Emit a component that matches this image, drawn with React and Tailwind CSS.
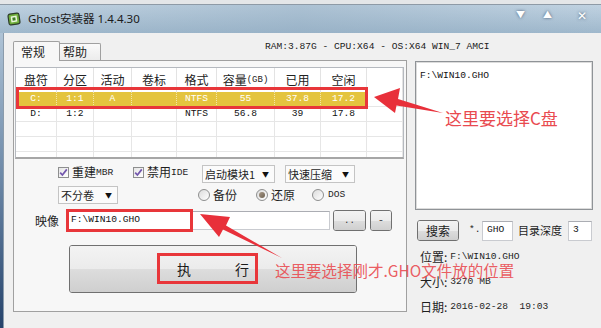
import React from "react";

const MONO = "font-['Liberation_Mono',monospace]";

const COLS = [41, 37, 38, 45, 40, 58, 46, 46, 36];

const HEAD = [
  "盘符",
  "分区",
  "活动",
  "卷标",
  "格式",
  <span key="c" className="flex items-center leading-none">
    容量<span className={`${MONO} text-[9px] leading-none mt-[1px]`}>(GB)</span>
  </span>,
  "已用",
  "空闲",
  "",
];

const ROWS = [
  ["C:", "1:1", "A", "", "NTFS", "55", "37.8", "17.2", ""],
  ["D:", "1:2", "", "", "NTFS", "56.8", "39", "17.8", ""],
  ["", "", "", "", "", "", "", "", ""],
  ["", "", "", "", "", "", "", "", ""],
  ["", "", "", "", "", "", "", "", ""],
];

function Table() {
  return (
    <div className="ml-[1px] w-[389px] h-[92px] overflow-hidden bg-white border border-[#b5b9bf] border-b-2 border-b-[#a6a6a6]">
      <div className="flex h-[24px]">
        {HEAD.map((h, i) => (
          <div
            key={i}
            style={{ width: COLS[i] }}
            className="shrink-0 flex items-center justify-center border-r border-[#e3e3e3] text-[12px] text-[#222]"
          >
            {h}
          </div>
        ))}
      </div>
      {ROWS.map((r, ri) => (
        <div key={ri} className="flex h-[15px]">
          {r.map((c, ci) => {
            const sel = ri === 0 && ci < 8;
            return (
              <div
                key={ci}
                style={{ width: COLS[ci] }}
                className={
                  sel
                    ? `shrink-0 flex items-center justify-center bg-[#e4c43e] text-white border-r border-dotted border-[#f3e6a6] ${MONO} text-[9.6px]`
                    : `shrink-0 flex items-center justify-center border-r border-b border-[#e6e6e6] text-[#111] ${MONO} text-[9.6px]`
                }
              >
                {c}
              </div>
            );
          })}
        </div>
      ))}
    </div>
  );
}

function Check({ label, mono }) {
  return (
    <div className="flex items-center h-[12px]">
      <div className="w-[11px] h-[11px] border border-[#8e8f8f] bg-gradient-to-br from-[#e6e6e6] to-[#ffffff] flex items-center justify-center">
        <svg width="9" height="9" viewBox="0 0 9 9">
          <path d="M1.2 4.6 L3.4 7 L7.8 1.4" fill="none" stroke="#7357ad" strokeWidth="1.7" />
        </svg>
      </div>
      <span className="ml-[3px] text-[12px] leading-none text-[#1e1e1e]">{label}</span>
      <span className={`${MONO} text-[9.6px] leading-none mt-[2px] text-[#1e1e1e]`}>{mono}</span>
    </div>
  );
}

function Select({ text, w }) {
  return (
    <div
      style={{ width: w }}
      className="h-[18px] border border-[#c4c4c4] bg-[#fbfbfb] flex items-center pl-[2px] pr-[5px]"
    >
      <span className="text-[11px] text-[#1e1e1e] leading-none whitespace-nowrap">{text}</span>
      <span className="ml-auto text-[7px] text-[#111]">▼</span>
    </div>
  );
}

function Radio({ label, on, mono }) {
  return (
    <div className="flex items-center">
      <div className="w-[12px] h-[12px] rounded-full border border-[#8e8f8f] bg-gradient-to-br from-[#dcdcdc] to-[#ffffff] flex items-center justify-center">
        {on && <div className="w-[6px] h-[6px] rounded-full bg-gradient-to-br from-[#a79886] to-[#6e6252]" />}
      </div>
      <span className={mono ? `ml-[4px] ${MONO} text-[9.6px] text-[#1e1e1e]` : "ml-[3px] text-[12px] text-[#1e1e1e]"}>
        {label}
      </span>
    </div>
  );
}

function Btn({ w, h, children, className = "" }) {
  return (
    <div
      style={{ width: w, height: h }}
      className={`relative shrink-0 rounded-[3px] border border-[#707070] overflow-hidden flex items-center justify-center ${className}`}
    >
      <div className="absolute inset-0 flex flex-col">
        <div className="flex-1 bg-gradient-to-b from-[#f3f3f3] to-[#ebebeb]" />
        <div className="flex-1 bg-gradient-to-b from-[#dddddd] to-[#cfcfcf]" />
      </div>
      <div className="relative flex items-center justify-center">{children}</div>
    </div>
  );
}

function Input({ w, h, children, className = "" }) {
  return (
    <div
      style={{ width: w, height: h }}
      className={`shrink-0 bg-white border border-[#c9cbd0] border-t-[#abadb3] flex items-center pl-[4px] ${className}`}
    >
      {children}
    </div>
  );
}

export default function App() {
  return (
    <div className="relative w-[601px] h-[328px] overflow-hidden bg-[#f0f0f0] font-['Noto_Sans_CJK_SC',sans-serif] text-[12px] text-[#1e1e1e]">
      {/* top strip */}
      <div className="h-[5px] bg-[#e4e6e8] border-b border-[#8e9aa6]" />
      {/* title bar */}
      <div className="relative h-[28px] bg-gradient-to-b from-[#c0d2e1] to-[#9fb8cc] flex items-center">
        <div className="absolute inset-0 bg-gradient-to-r from-transparent via-[#8fa9bf]/40 to-transparent" />
        <div className="relative ml-[7px] w-[14px] h-[14px]">
          <svg width="14" height="14" viewBox="0 0 14 14">
            <rect x="1.5" y="1.5" width="11" height="11" rx="2" fill="#6fae3a" stroke="#2d3b2a" strokeWidth="1.2" transform="rotate(-8 7 7)" />
            <rect x="4" y="4" width="6" height="6" fill="#e9f5da" transform="rotate(-8 7 7)" />
            <rect x="5.5" y="5.5" width="3" height="3" fill="#3e7c22" transform="rotate(-8 7 7)" />
          </svg>
        </div>
        <span className="relative ml-[7px] font-['Noto_Sans','Noto_Sans_CJK_SC',sans-serif] text-[11.5px] text-[#1b1b1b]">
          Ghost安装器 1.4.4.30
        </span>
        <div className="relative ml-auto flex items-center text-white mr-[14px] -mt-[8px] [text-shadow:0_0_3px_rgba(40,60,90,0.8)]">
          <span className="text-[9px]">▼</span>
          <span className="ml-[18px] text-[9px]">▲</span>
          <span className="ml-[25px] text-[12px]">✕</span>
        </div>
      </div>
      {/* body */}
      <div className="flex h-[295px]">
        <div className="w-[4px] bg-gradient-to-b from-[#aec3d6] via-[#6b87a6] to-[#26436b] border-r border-[#8a9bab]" />
        <div className="flex-1 flex flex-col pl-[9px]">
          {/* tabs row */}
          <div className="flex items-end h-[27px]">
            <div className="relative z-10 -mb-px w-[47px] h-[20px] bg-[#f7f7f7] border border-b-0 border-[#a0a0a0] rounded-t-[2px] flex items-center pl-[7px] text-[12px]">
              常规
            </div>
            <div className="w-[41px] h-[17px] bg-gradient-to-b from-[#fafafa] to-[#ececec] border border-l-0 border-b-0 border-[#a0a0a0] rounded-tr-[2px] flex items-center pl-[3px] text-[12px]">
              帮助
            </div>
            <span className={`self-center ml-[164px] mt-[1px] ${MONO} text-[9.6px] text-[#1a1a1a]`}>
              RAM:3.87G - CPU:X64 - OS:X64 WIN_7 AMCI
            </span>
          </div>
          <div className="flex">
            {/* left panel */}
            <div className="shrink-0 w-[394px] h-[252px] border border-[#a0a0a0] bg-[#f7f7f7] pt-[6px] flex flex-col">
              <Table />
              {/* row 1 */}
              <div className="flex items-start h-[19px] mt-[6px]">
                <div className="ml-[44px] w-[74px] mt-[1px]">
                  <Check label="重建" mono="MBR" />
                </div>
                <div className="ml-[1px] w-[69px] mt-[1px]">
                  <Check label="禁用" mono="IDE" />
                </div>
                <Select text="启动模块1" w={73} />
                <div className="ml-[10px]">
                  <Select text="快速压缩" w={70} />
                </div>
              </div>
              {/* row 2 */}
              <div className="flex items-center h-[18px] mt-[2px]">
                <div className="ml-[44px]">
                  <Select text="不分卷" w={60} />
                </div>
                <div className="ml-[80px] w-[58px]">
                  <Radio label="备份" />
                </div>
                <div className="w-[56px]">
                  <Radio label="还原" on />
                </div>
                <Radio label="DOS" mono />
              </div>
              {/* row 3 */}
              <div className="flex items-center h-[21px] mt-[6px]">
                <span className="ml-[21px] w-[31px] text-[12px]">映像</span>
                <Input w={264} h={19}>
                  <span className={`${MONO} text-[9.6px] text-[#111]`}>{"F:\\WIN10.GHO"}</span>
                </Input>
                <div className="ml-[3px]">
                  <Btn w={33} h={21}>
                    <span className={`${MONO} text-[9px] text-[#333] mt-[3px]`}>..</span>
                  </Btn>
                </div>
                <div className="ml-[4px]">
                  <Btn w={22} h={21}>
                    <span className="text-[11px] text-[#333] leading-none -mt-[2px]">-</span>
                  </Btn>
                </div>
              </div>
              {/* execute */}
              <div className="ml-[55px] mt-[14px]">
                <Btn w={288} h={48}>
                  <div className="flex gap-[44px] text-[14px] text-[#1a1a1a]">
                    <span>执</span>
                    <span>行</span>
                  </div>
                </Btn>
              </div>
            </div>
            {/* right column */}
            <div className="ml-[8px] w-[178px] flex flex-col">
              <div className="mt-[1px] h-[149px] bg-white border border-[#8f9397] shadow-[inset_0_0_0_1px_#dcdcdc] pt-[2px] pl-[4px]">
                <span className={`${MONO} text-[9.6px] text-[#111]`}>{"F:\\WIN10.GHO"}</span>
              </div>
              <div className="flex items-center h-[21px] mt-[10px]">
                <Btn w={42} h={21} className="ml-[2px]">
                  <span className="text-[12px] text-[#1a1a1a]">搜索</span>
                </Btn>
                <span className={`shrink-0 ml-[10px] w-[13px] ${MONO} text-[9.6px]`}>*.</span>
                <Input w={31} h={20} className="pl-[3px]">
                  <span className={`${MONO} text-[9.6px] text-[#111]`}>GHO</span>
                </Input>
                <span className="shrink-0 ml-[5px] w-[45px] whitespace-nowrap text-[11px]">目录深度</span>
                <div className="ml-[5px] shrink-0">
                  <Input w={24} h={20}>
                    <span className={`${MONO} text-[9.6px] text-[#111]`}>3</span>
                  </Input>
                </div>
              </div>
              <div className="ml-[5px] mt-[6px] h-[20px] flex items-center">
                <span className="text-[12px]">位置:</span>
                <span className={`ml-[3px] ${MONO} text-[9.6px]`}>{"F:\\WIN10.GHO"}</span>
              </div>
              <div className="ml-[5px] mt-[5px] h-[20px] flex items-center">
                <span className="text-[12px]">大小:</span>
                <span className={`ml-[3px] ${MONO} text-[9.6px]`}>3270 MB</span>
              </div>
              <div className="ml-[5px] mt-[5px] h-[20px] flex items-center">
                <span className="text-[12px]">日期:</span>
                <span className={`ml-[3px] ${MONO} text-[9.6px] whitespace-pre`}>2016-02-28  19:03</span>
              </div>
            </div>
          </div>
        </div>
      </div>

      {/* annotations overlay */}
      <div className="absolute left-[16px] top-[87px] w-[352px] h-[22px] border-[3px] border-[#e8363a]" />
      <div className="absolute left-[66px] top-[209px] w-[127px] h-[23px] border-[3px] border-[#e8363a]" />
      <div className="absolute left-[157px] top-[253px] w-[101px] h-[31px] border-[3px] border-[#e8363a]" />
      <svg className="absolute left-0 top-0 pointer-events-none" width="601" height="328" viewBox="0 0 601 328">
        <polygon points="374,97 400,88 398,99 443,113 396.5,105.5 395,113" fill="#e8303a" />
        <polygon points="200,214 230,217 226,225.6 282,258 223,229.6 219,237" fill="#e8303a" />
      </svg>
      <span className="absolute left-[445px] top-[106px] text-[17px] leading-[24px] text-[#e94a4f] whitespace-nowrap">
        这里要选择C盘
      </span>
      <span className="absolute left-[275px] top-[258px] text-[15.5px] leading-[24px] text-[#e94a4f]/90 whitespace-nowrap">
        这里要选择刚才.GHO文件放的位置
      </span>
    </div>
  );
}
